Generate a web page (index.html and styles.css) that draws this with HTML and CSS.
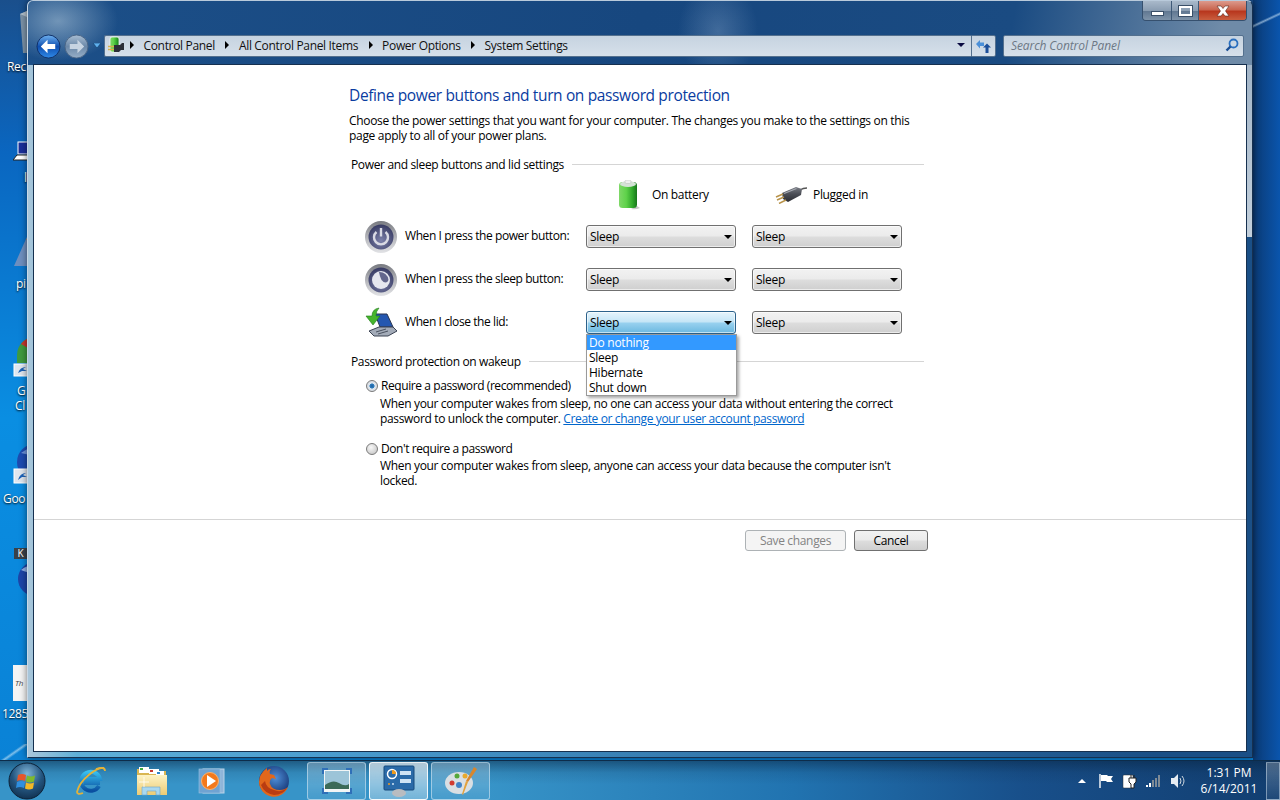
FILE: index.html
```html
<!DOCTYPE html>
<html lang="en">
<head>
  <meta charset="UTF-8">
  <title>System Settings</title>
  <link rel="stylesheet" href="styles.css">
</head>
<body>

  <!-- shared gradients -->
  <svg class="defs" width="0" height="0">
    <defs>
      <linearGradient id="g-ring" x1="0" y1="0" x2="0" y2="1"><stop offset="0" stop-color="#77797f"/><stop offset=".5" stop-color="#b3b4b9"/><stop offset="1" stop-color="#e2e3e6"/></linearGradient>
      <radialGradient id="g-navy" cx=".5" cy=".65" r=".7"><stop offset="0" stop-color="#7d82ab"/><stop offset="1" stop-color="#31345c"/></radialGradient>
      <linearGradient id="g-batt" x1="0" y1="0" x2="1" y2="0"><stop offset="0" stop-color="#7fd868"/><stop offset=".4" stop-color="#5fd24a"/><stop offset=".75" stop-color="#2fa72a"/><stop offset="1" stop-color="#17761b"/></linearGradient>
      <linearGradient id="g-back" x1="0" y1="0" x2="0" y2="1"><stop offset="0" stop-color="#6fb2f0"/><stop offset=".5" stop-color="#0f4fb0"/><stop offset="1" stop-color="#2f8ae8"/></linearGradient>
      <linearGradient id="g-fwd" x1="0" y1="0" x2="0" y2="1"><stop offset="0" stop-color="#a9bed3"/><stop offset=".5" stop-color="#6b88a8"/><stop offset="1" stop-color="#97afc8"/></linearGradient>
      <linearGradient id="g-folder" x1="0" y1="0" x2="0" y2="1"><stop offset="0" stop-color="#fdf3c4"/><stop offset="1" stop-color="#eccb74"/></linearGradient>
      <radialGradient id="g-fox" cx=".55" cy=".4" r=".6"><stop offset="0" stop-color="#4f8fd8"/><stop offset="1" stop-color="#12306f"/></radialGradient>
      <radialGradient id="g-orb" cx=".5" cy=".3" r=".75"><stop offset="0" stop-color="#7fb5d8"/><stop offset=".55" stop-color="#24557f"/><stop offset="1" stop-color="#0e2c4a"/></radialGradient>
      <linearGradient id="g-ie" x1="0" y1="0" x2="0" y2="1"><stop offset="0" stop-color="#39c0f0"/><stop offset="1" stop-color="#0a4fa0"/></linearGradient>
      <linearGradient id="g-plug" x1="0" y1="0" x2="0" y2="1"><stop offset="0" stop-color="#7a7d85"/><stop offset=".45" stop-color="#4c4f57"/><stop offset="1" stop-color="#2a2c32"/></linearGradient>
    </defs>
  </svg>

  <div class="desktop">
    <!-- desktop icons, mostly hidden behind the window -->
    <svg class="desk-icon icon-bin" width="10" height="48" viewBox="0 0 10 48"><path d="M3 6l7-3v42H6z" fill="#7c93a8"/><path d="M3 6l7-3v6z" fill="#b4c2ce"/></svg>
    <span class="desk-label label-rec">Rec</span>
    <svg class="desk-icon icon-laptop" width="24" height="24" viewBox="0 0 24 24"><rect x="5" y="2" width="15" height="12" fill="#1a2f9a" stroke="#fff"/><path d="M0 20l4-5h16v5z" fill="#fff" stroke="#222"/></svg>
    <span class="desk-label label-l">l</span>
    <svg class="desk-icon icon-cone" width="24" height="40" viewBox="0 0 24 40"><path d="M2 38L18 2l6 0v36z" fill="#6f8fbf"/><path d="M14 12l6-10 4 8z" fill="#d08a3f"/></svg>
    <span class="desk-label label-p">pi</span>
    <svg class="desk-icon icon-chrome" width="24" height="40" viewBox="0 0 24 40"><path d="M24 0A18 18 0 0 0 6 18v8h18z" fill="#3f9a3f"/><path d="M24 0a18 18 0 0 0-14 7l14 8z" fill="#c8372f"/><rect x="3" y="27" width="16" height="12" fill="#dfe6ee" stroke="#fff"/><path d="M7 36q2-6 8-6l-3 2 4 2-5 0z" fill="#1c63b8"/></svg>
    <span class="desk-label label-g1">G</span>
    <span class="desk-label label-cl">Cl</span>
    <svg class="desk-icon icon-earth" width="24" height="44" viewBox="0 0 24 44"><circle cx="24" cy="19" r="18" fill="#1d4bb0"/><path d="M10 10q8-6 14-6v8q-8 0-14-2z" fill="#6f95dd"/><rect x="3" y="26" width="16" height="14" fill="#dfe6ee" stroke="#fff"/><path d="M7 37q2-7 8-7l-3 2 4 2-5 0z" fill="#1c63b8"/></svg>
    <span class="desk-label label-goo">Goo</span>
    <span class="desk-chip">K</span>
    <svg class="desk-icon icon-ball" width="24" height="34" viewBox="0 0 24 34"><circle cx="24" cy="17" r="17" fill="#1d45a8"/><path d="M10 8q6-5 14-5v8q-8 0-14-3z" fill="#8fb0e8"/></svg>
    <div class="desk-doc"><span>Th</span></div>
    <span class="desk-label label-num">1285</span>

    <div class="window">
      <div class="caption">
        <div class="caption-btns">
          <span class="cap-btn cap-min"><i></i></span>
          <span class="cap-btn cap-max"><i></i></span>
          <span class="cap-btn cap-close">
            <svg width="18" height="12" viewBox="0 0 18 12"><path d="M3 1h4l2 2.500L11 1h4l-3.500 5L15 11h-4L9 8.500 7 11H3l3.500-5z" fill="#fff" stroke="#5a2a20" stroke-width=".6"/></svg>
          </span>
        </div>
      </div>

      <div class="toolbar">
        <div class="nav-btns">
          <svg width="25" height="25" viewBox="0 0 26 26"><circle cx="13" cy="13" r="12" fill="url(#g-back)" stroke="#0f2f66"/><path d="M5 13l7-7v4.500h8v5h-8V20z" fill="#fff"/></svg>
          <svg width="25" height="25" viewBox="0 0 26 26"><circle cx="13" cy="13" r="12" fill="url(#g-fwd)" stroke="#4a6585"/><path d="M21 13l-7-7v4.500H6v5h8V20z" fill="#c7d4e2"/></svg>
          <svg class="nav-drop" width="10" height="6" viewBox="0 0 10 6"><path d="M1 0h8L5 5z" fill="#5fb0ee" stroke="#0d3a66" stroke-width=".6"/></svg>
        </div>
        <div class="address">
          <svg class="crumb-icon" width="18" height="18" viewBox="0 0 18 18"><rect x="3" y="1" width="9" height="15" rx="2" fill="url(#g-batt)" stroke="#f4f8f4" stroke-width=".8"/><path d="M7 9h6l2-2h2v7h-3l-2 2H7z" fill="#2c2f38"/><path d="M1 10.500h6M1 13.500h6" stroke="#d8b24a" stroke-width="1.300"/></svg>
          <span class="crumb-arrow"></span><span>Control Panel</span>
          <span class="crumb-arrow"></span><span>All Control Panel Items</span>
          <span class="crumb-arrow"></span><span>Power Options</span>
          <span class="crumb-arrow"></span><span>System Settings</span>
          <span class="address-drop"></span>
        </div>
        <div class="refresh">
          <svg width="16" height="16" viewBox="0 0 16 16"><path d="M0 6l4-4v2.500h4V8H4v2.500z" fill="#4a8fd8"/><path d="M15 9.500l-4-4-4 4h2.500V15h3V9.500z" fill="#1c4f9a"/></svg>
        </div>
        <div class="search">
          <span>Search Control Panel</span>
          <svg width="14" height="14" viewBox="0 0 14 14"><circle cx="8.500" cy="5.500" r="4" fill="none" stroke="#2a6fbf" stroke-width="1.800"/><path d="M5.500 8.500L1.500 12.500" stroke="#1b4f95" stroke-width="2.400"/></svg>
        </div>
      </div>

      <div class="content">
        <div class="panel">
          <h1>Define power buttons and turn on password protection</h1>
          <p class="intro">Choose the power settings that you want for your computer. The changes you make to the settings on this page apply to all of your power plans.</p>

          <div class="group-head first">Power and sleep buttons and lid settings</div>

          <div class="setting-grid head-row">
            <div></div>
            <div class="col-head">
              <svg class="battery" width="22" height="30" viewBox="0 0 22 30"><path d="M18 26l3 2q-4 2-9 1z" fill="#c9c9c9"/><rect x="0" y="2" width="18" height="26" rx="3.500" fill="url(#g-batt)"/><ellipse cx="9" cy="4" rx="8" ry="3" fill="#d5e2d6"/><rect x="6" y="0" width="6" height="3.500" rx="1.500" fill="#eef0ee" stroke="#a9b0aa" stroke-width=".4"/></svg>
              <span>On battery</span>
            </div>
            <div class="col-head plug">
              <svg width="32" height="17" viewBox="0 0 32 17"><path d="M25 3q3-2 7-2" stroke="#555" stroke-width="1.400" fill="none"/><path d="M7 6L21 0l6 2-1 6-13 7-5-3z" fill="url(#g-plug)"/><path d="M9 6.500L21.500 1.500" stroke="#a4a7af" stroke-width="1.200"/><path d="M8 7L1 10M9 10L2 13M11 13l-7 3.500" stroke="#b8934a" stroke-width="1.500"/></svg>
              <span>Plugged in</span>
            </div>
          </div>

          <div class="setting-grid">
            <div class="setting-label">
              <svg width="32" height="32" viewBox="0 0 32 32"><circle cx="16" cy="16" r="16" fill="url(#g-ring)"/><circle cx="16" cy="16" r="12.500" fill="url(#g-navy)"/><path d="M11.500 11a7 7 0 1 0 9 0" fill="none" stroke="#d9dae4" stroke-width="2.400"/><path d="M16 7v8.500" stroke="#d9dae4" stroke-width="2.400"/></svg>
              <span>When I press the power button:</span>
            </div>
            <div class="combo"><span>Sleep</span></div>
            <div class="combo"><span>Sleep</span></div>
          </div>

          <div class="setting-grid">
            <div class="setting-label">
              <svg width="32" height="32" viewBox="0 0 32 32"><circle cx="16" cy="16" r="16" fill="url(#g-ring)"/><circle cx="16" cy="16" r="12.500" fill="url(#g-navy)"/><circle cx="16" cy="16" r="9" fill="#e6e7ef"/><path d="M14 8a9 9 0 0 1 9.500 8q-1 2.500-3 2.500-5-.5-6.500-10.500z" fill="#63668c"/></svg>
              <span>When I press the sleep button:</span>
            </div>
            <div class="combo"><span>Sleep</span></div>
            <div class="combo"><span>Sleep</span></div>
          </div>

          <div class="setting-grid">
            <div class="setting-label">
              <svg width="32" height="32" viewBox="0 0 32 32"><path d="M10 7h12l6 13H15z" fill="#2457b0" stroke="#2a3550"/><path d="M4 24l10-4h14l4 4-9 5H9z" fill="#a3abb8" stroke="#3a4252"/><path d="M11 25l10-3M13 27l10-3" stroke="#4a5260"/><path d="M14 1q-7 1-7 8H1l7 9 7-9H11q0-5 3-8z" fill="#46b52c" stroke="#1f7a1a" stroke-width=".6"/></svg>
              <span>When I close the lid:</span>
            </div>
            <div class="combo-wrap">
              <div class="combo open"><span>Sleep</span></div>
              <ul class="dropdown">
                <li class="selected">Do nothing</li>
                <li>Sleep</li>
                <li>Hibernate</li>
                <li>Shut down</li>
              </ul>
            </div>
            <div class="combo"><span>Sleep</span></div>
          </div>

          <div class="group-head">Password protection on wakeup</div>

          <div class="option first-option">
            <div class="radio-line"><span class="radio checked"></span><span>Require a password (recommended)</span></div>
            <p class="option-desc">When your computer wakes from sleep, no one can access your data without entering the correct password to unlock the computer. <a href="#">Create or change your user account password</a></p>
          </div>
          <div class="option">
            <div class="radio-line"><span class="radio"></span><span>Don't require a password</span></div>
            <p class="option-desc">When your computer wakes from sleep, anyone can access your data because the computer isn't locked.</p>
          </div>
        </div>

        <div class="divider"></div>

        <div class="actions">
          <button class="btn btn-save" disabled>Save changes</button>
          <button class="btn btn-cancel">Cancel</button>
        </div>
      </div>
    </div>
  </div>

  <div class="taskbar">
    <div class="start">
      <svg width="38" height="38" viewBox="0 0 38 38"><circle cx="19" cy="19" r="18" fill="url(#g-orb)" stroke="#0c2238"/><path d="M10 13q4-2 8 0l-1 6q-4-2-8 0z" fill="#e8562a"/><path d="M19 13.500q4 2 8 0l-1 6q-4 2-8 0z" fill="#7fba2c"/><path d="M9 20q4-2 8 0l-1 6q-4-2-8 0z" fill="#2f8fe0"/><path d="M18 20.500q4 2 8 0l-1 6q-4 2-8 0z" fill="#f4b927"/></svg>
    </div>
    <div class="task-icon first-task">
      <svg width="32" height="30" viewBox="0 0 32 30"><path d="M24 20a9.500 9.500 0 1 1 1-7H11v4h14" fill="none" stroke="url(#g-ie)" stroke-width="4"/><path d="M29 2C22 1 5 13 2 26q0 3 6 1" fill="none" stroke="#e3b23a" stroke-width="1.800"/><path d="M21 3q9-3 9 2" fill="none" stroke="#e3b23a" stroke-width="1.800"/></svg>
    </div>
    <div class="task-icon">
      <svg width="32" height="30" viewBox="0 0 32 30"><path d="M1 3h12l2 2h15v23H1z" fill="#d9b652"/><rect x="3" y="1" width="10" height="6" fill="#fff"/><rect x="4" y="2" width="3" height="2" fill="#3fa83f"/><rect x="13" y="3" width="10" height="5" fill="#fff"/><rect x="14" y="4" width="3" height="2" fill="#c8372f"/><rect x="20" y="5" width="8" height="4" fill="#fff"/><rect x="21" y="6" width="3" height="2" fill="#2f83c8"/><rect x="1" y="9" width="30" height="20" fill="url(#g-folder)"/><path d="M6 29v-8h18v8h-4v-4H11v4z" fill="#a9d8f0" stroke="#6fa6c8" stroke-width=".6"/><path d="M8 11v10M3 16h10" stroke="#fff" stroke-width=".8"/></svg>
    </div>
    <div class="task-icon">
      <svg width="30" height="26" viewBox="0 0 30 26"><rect x="5" y="1" width="21" height="24" fill="#8fb5d9" stroke="#b9d3e8"/><rect x="1" y="1" width="21" height="24" fill="#6fa3d2" stroke="#9cc2e0" stroke-width=".6"/><circle cx="12" cy="13" r="8.500" fill="#f3791c" stroke="#fbb26d"/><path d="M9 7l9 6-9 6z" fill="#fff"/></svg>
    </div>
    <div class="task-icon">
      <svg width="32" height="32" viewBox="0 0 32 32"><circle cx="16" cy="16" r="15" fill="url(#g-fox)"/><path d="M9 3Q1 9 1 17a15 15 0 0 0 29 5q-3 3-8 3-8 0-10-6-1-4 2-6l4 1-2-4-4-1q-1-3 1-5-3 0-4 2z" fill="#e2671b"/><path d="M3 20q3 8 13 10 9 0 13-7-6 5-13 2-8-2-9-9z" fill="#b93c12"/></svg>
    </div>
    <div class="task-btn">
      <svg width="32" height="28" viewBox="0 0 32 28"><path d="M1 1h6v3H4v3H1zM25 1h6v6h-3V4h-3zM1 21h3v3h3v3H1zM28 21h3v6h-6v-3h3z" fill="#2f6fb8"/><rect x="3" y="3" width="26" height="22" fill="#f2f5f6"/><rect x="4" y="4" width="24" height="18" fill="#9cc4d8"/><path d="M4 18q8-6 14-2t10 1v5H4z" fill="#3b6a58"/></svg>
    </div>
    <div class="task-btn active">
      <svg width="32" height="32" viewBox="0 0 32 32"><rect x="1" y="1" width="30" height="24" rx="1" fill="#2a6aa8" stroke="#174a7c"/><circle cx="9" cy="9" r="4.500" fill="none" stroke="#fff" stroke-width="1.500"/><path d="M9 9V5a4 4 0 0 1 4 4z" fill="#f09a1c"/><rect x="17" y="6" width="11" height="4" fill="#cfe3f4"/><rect x="17" y="14" width="11" height="4" fill="#cfe3f4"/><circle cx="6" cy="19" r="1" fill="#f09a1c"/><circle cx="10" cy="19" r="1" fill="#cfe3f4"/><ellipse cx="16" cy="28" rx="7" ry="4" fill="#b9bcc0"/></svg>
    </div>
    <div class="task-btn">
      <svg width="34" height="34" viewBox="0 0 34 34"><ellipse cx="15" cy="19" rx="14" ry="11" fill="#d9dfe3"/><circle cx="8" cy="19" r="2.500" fill="#d13a30"/><circle cx="13" cy="12" r="2.500" fill="#55a83a"/><circle cx="21" cy="12" r="2.500" fill="#e8a92c"/><circle cx="15" cy="21" r="3" fill="#3f83c8"/><path d="M30 3l3 2-9 13-2-1z" fill="#d8862c"/><path d="M22 17l2 1-5 13-1-1z" fill="#e3a23c"/></svg>
    </div>

    <div class="tray">
      <svg class="tray-chevron" width="8" height="5" viewBox="0 0 8 5"><path d="M0 5l4-4 4 4z" fill="#fff"/></svg>
      <svg width="16" height="16" viewBox="0 0 16 16"><path d="M2 1v14" stroke="#fff" stroke-width="1.400"/><path d="M3 2h6l1 1h5l-2 3 2 3H9L8 8H3z" fill="#fff"/></svg>
      <svg width="16" height="16" viewBox="0 0 16 16"><rect x="1" y="2" width="10" height="13" rx="1" fill="#fff" stroke="#333" stroke-width=".5"/><path d="M7 5h7v4l-2 2v4H9v-4L7 9zM9 2v3M12 2v3" fill="#fff" stroke="#222" stroke-width="1"/></svg>
      <svg width="16" height="14" viewBox="0 0 16 14"><rect x="0" y="11" width="2" height="2" fill="#fff"/><rect x="3" y="9" width="2" height="4" fill="#fff"/><rect x="6" y="6" width="2" height="7" fill="#7d8a96"/><rect x="9" y="4" width="2" height="9" fill="#7d8a96"/><rect x="12" y="1" width="2" height="12" fill="#7d8a96"/></svg>
      <svg width="16" height="16" viewBox="0 0 16 16"><path d="M1 5h3l4-4v14l-4-4H1z" fill="#e6ecf2"/><path d="M10 5q2 3 0 6M12 3q4 5 0 10" fill="none" stroke="#cfd8e0"/></svg>
    </div>
    <div class="clock">
      <span>1:31 PM</span>
      <span>6/14/2011</span>
    </div>
    <div class="show-desktop"></div>
  </div>

</body>
</html>
```

FILE: styles.css
```css
/* Global */
html, body {
  margin: 0;
  padding: 0;
  height: 100%;
}
body {
  display: flex;
  flex-direction: column;
  height: 800px;
  overflow: hidden;
  font-family: "Open Sans", "Noto Sans", sans-serif;
  font-size: 12px;
  line-height: 15px;
  letter-spacing: -0.33px;
  color: #000;
}
svg {
  display: block;
  flex: none;
}
.defs {
  position: absolute;
}

/* Desktop */
.desktop {
  position: relative;
  flex: 1;
  overflow: hidden;
  background:
    linear-gradient(155deg, transparent 46%, rgba(200,225,245,.6) 50%, transparent 54%) right top / 27px 40px no-repeat,
    linear-gradient(90deg, #0b3a74 0, #0a55ad 100%) right top / 27px 100% no-repeat,
    linear-gradient(145deg, transparent 45%, rgba(220,240,250,.55) 52%, transparent 60%) left bottom / 28px 16px no-repeat,
    linear-gradient(180deg, #1a4f8c 0, #0a66c0 20%, #0a8ee2 55%, #0a82d6 100%);
}
.desk-label {
  position: absolute;
  color: #fff;
  text-shadow: 0 1px 2px #000;
}
.desk-icon {
  position: absolute;
  left: 3px;
}
.label-rec { left: 7px; top: 59px; }
.label-l { left: 24px; top: 170px; }
.label-p { left: 16px; top: 276px; }
.label-g1 { left: 17px; top: 383px; }
.label-cl { left: 15px; top: 398px; }
.label-goo { left: 3px; top: 491px; }
.label-num { left: 2px; top: 706px; }
.icon-bin { left: 17px; top: 8px; }
.icon-laptop { left: 13px; top: 140px; }
.icon-cone { top: 228px; left: 12px; }
.icon-chrome { top: 337px; left: 11px; }
.icon-earth { top: 443px; left: 11px; }
.icon-ball { top: 562px; left: 11px; }
.desk-chip {
  position: absolute;
  left: 14px;
  top: 548px;
  width: 13px;
  height: 11px;
  background: #3a4148;
  color: #fff;
  font-size: 10px;
  line-height: 11px;
  text-align: center;
}
.desk-doc {
  position: absolute;
  left: 13px;
  top: 665px;
  width: 14px;
  height: 36px;
  background: #f4f4f4;
  color: #444;
  font-size: 8px;
  font-style: italic;
  line-height: 36px;
  padding-left: 2px;
}

/* Window frame */
.window {
  position: absolute;
  left: 27px;
  top: 0;
  width: 1226px;
  height: 758px;
  box-sizing: border-box;
  padding: 0 5px 5px;
  display: flex;
  flex-direction: column;
  border: 1px solid #16304f;
  border-top-color: #b9cadb;
  border-left-color: #c9d8e6;
  border-radius: 6px 6px 0 0;
  background:
    radial-gradient(ellipse 60px 40px at 30px 20px, rgba(170,195,215,.6), transparent),
    radial-gradient(ellipse 40px 50px at 690px 30px, rgba(140,170,205,.35), transparent),
    linear-gradient(100deg, #1c4f88 0, #17477f 50%, #1a4b82 80%, #6f8ba8 97%) left top / 100% 64px no-repeat,
    linear-gradient(180deg, #a4b6c8 0, #c3d0dc 100%) right 64px / 7px 172px no-repeat,
    linear-gradient(90deg, #a9c6da 0, #5fb0d8 4%, #4a9ccf 25%, #1a4f86 92%);
  box-shadow: 0 0 7px rgba(0,0,0,.55);
}
.caption {
  display: flex;
  justify-content: flex-end;
  height: 19px;
}
.caption-btns {
  display: flex;
  height: 20px;
  border: 1px solid #36506e;
  border-top: none;
  border-radius: 0 0 4px 4px;
  overflow: hidden;
  box-sizing: border-box;
}
.cap-btn {
  display: flex;
  align-items: center;
  justify-content: center;
  width: 28px;
  border-right: 1px solid #3f5a78;
  background: linear-gradient(180deg, #a9b9ca 0, #8a9db2 50%, #5f7690 51%, #7e93a9 100%);
}
.cap-max { width: 26px; }
.cap-close {
  width: 47px;
  border-right: none;
  background: linear-gradient(180deg, #dc9a8c 0, #c9654f 45%, #b8371e 55%, #c95e3f 100%);
}
.cap-min i {
  display: block;
  width: 11px;
  height: 3px;
  margin-top: 5px;
  background: #fff;
  border: 1px solid #3a4f68;
}
.cap-max i {
  display: block;
  width: 9px;
  height: 6px;
  border: 2px solid #fff;
  outline: 1px solid #3a4f68;
}

/* Address row */
.toolbar {
  display: flex;
  align-items: center;
  height: 22px;
  margin: 15px 3px 7px 3px;
}
.nav-btns {
  display: flex;
  align-items: center;
  gap: 3px;
  width: 68px;
  flex: none;
}
.nav-drop {
  margin-left: 0;
}
.address,
.refresh,
.search {
  height: 22px;
  box-sizing: border-box;
  border: 1px solid #54708e;
  background: linear-gradient(180deg, #c6d3e0 0, #d6e0ea 100%);
}
.address {
  flex: 1;
  display: flex;
  align-items: center;
  padding: 0 0 2px 2px;
  border-right: none;
  border-radius: 2px 0 0 2px;
  color: #111;
}
.crumb-icon {
  margin-right: -5.5px;
}
.crumb-arrow {
  width: 0;
  height: 0;
  margin: 0 9.5px 0 10.5px;
  border-left: 4px solid #000;
  border-top: 4px solid transparent;
  border-bottom: 4px solid transparent;
}
.address-drop {
  width: 0;
  height: 0;
  margin-left: auto;
  margin-right: 6px;
  border-top: 4px solid #0a0a40;
  border-left: 4px solid transparent;
  border-right: 4px solid transparent;
}
.refresh {
  display: flex;
  align-items: center;
  justify-content: center;
  width: 25px;
  margin-right: 7px;
  border-radius: 0 2px 2px 0;
}
.search {
  display: flex;
  align-items: center;
  justify-content: space-between;
  width: 241px;
  padding: 0 4px 2px 7px;
  border-radius: 2px;
  color: #6d7885;
  font-style: italic;
  letter-spacing: -0.1px;
}

/* Content */
.content {
  flex: 1;
  background: #fff;
  border: 1px solid #16304f;
  box-sizing: border-box;
}
.panel {
  margin-left: 315px;
  width: 575px;
  padding-top: 19px;
}
h1 {
  margin: 0;
  font-size: 15.5px;
  line-height: 22px;
  font-weight: 400;
  letter-spacing: -0.37px;
  color: #0a3ca0;
}
.intro {
  margin: 7px 0 0;
  letter-spacing: -0.31px;
}
.group-head {
  display: flex;
  align-items: center;
  gap: 8px;
  padding-left: 2px;
  margin-top: 20px;
  letter-spacing: -0.35px;
}
.group-head::after {
  content: "";
  flex: 1;
  height: 1px;
  background: #d5d5d5;
}
.group-head.first {
  margin-top: 14px;
}

/* Settings grid */
.setting-grid {
  display: grid;
  grid-template-columns: 221px 150px 150px;
  column-gap: 16px;
  align-items: center;
  height: 23px;
}
.setting-grid + .setting-grid {
  margin-top: 20px;
}
.setting-grid.head-row {
  height: 30px;
  margin-top: 8px;
}
.setting-grid.head-row + .setting-grid {
  margin-top: 15px;
}
.col-head {
  display: flex;
  align-items: center;
  gap: 11px;
  padding-left: 33px;
}
.col-head span {
  margin-top: -2px;
}
.col-head.plug {
  padding-left: 23px;
  gap: 6px;
}
.setting-label {
  display: flex;
  align-items: center;
  gap: 8px;
  padding-left: 16px;
  height: 23px;
  letter-spacing: -0.42px;
}
.setting-label span {
  margin-top: -2px;
}
.combo {
  position: relative;
  height: 23px;
  box-sizing: border-box;
  border: 1px solid #707070;
  border-radius: 3px;
  padding: 3px 0 0 3px;
  letter-spacing: -0.25px;
  background: linear-gradient(180deg, #f2f2f2 0, #ebebeb 48%, #dddddd 52%, #cfcfcf 100%);
  box-shadow: inset 0 0 0 1px rgba(255,255,255,.6);
}
.combo::after {
  content: "";
  position: absolute;
  right: 3px;
  top: 9px;
  border-top: 4px solid #000;
  border-left: 4px solid transparent;
  border-right: 4px solid transparent;
}
.combo.open {
  border-color: #2c628b;
  background: linear-gradient(180deg, #e5f4fc 0, #c4e5f6 48%, #98d1ef 52%, #6cb8e0 100%);
}
.combo-wrap {
  position: relative;
}
.dropdown {
  position: absolute;
  left: 0;
  top: 23px;
  z-index: 2;
  width: 151px;
  box-sizing: border-box;
  margin: 0;
  padding: 0;
  height: 62px;
  list-style: none;
  letter-spacing: -0.25px;
  background: #fff;
  border: 1px solid #9a9a9a;
  box-shadow: 2px 2px 3px rgba(0,0,0,.35);
}
.dropdown li {
  height: 15px;
  padding-left: 2px;
}
.dropdown .selected {
  background: #3399ff;
  color: #fff;
}

/* Password options */
.first-option {
  margin-top: 9px;
}
.option + .option {
  margin-top: 15px;
}
.radio-line {
  display: flex;
  align-items: center;
  gap: 3px;
  padding-left: 17px;
  letter-spacing: -0.42px;
}
.radio {
  width: 10px;
  height: 10px;
  border: 1px solid #7a7a7a;
  border-radius: 50%;
  background: radial-gradient(circle at 40% 35%, #f8f8f8, #bfbfbf);
}
.radio.checked {
  background: radial-gradient(circle, #1f5f9f 0, #2f7fbf 32%, #dfe6ee 40%, #d0d4d8 100%);
}
.option-desc {
  margin: 3px 0 0;
  padding-left: 31px;
  width: 525px;
  letter-spacing: -0.34px;
}
.option + .option .option-desc {
  margin-top: 2px;
}
.option-desc a {
  letter-spacing: -0.37px;
  color: #0066cc;
}

/* Bottom buttons */
.divider {
  height: 1px;
  margin-top: 31px;
  background: #d5d5d5;
}
.actions {
  display: flex;
  justify-content: flex-end;
  gap: 8px;
  margin-top: 10px;
  padding-right: 318px;
}
.btn {
  height: 21px;
  padding: 0;
  border: 1px solid #707070;
  border-radius: 3px;
  font: inherit;
  letter-spacing: inherit;
  background: linear-gradient(180deg, #f2f2f2 0, #ebebeb 48%, #dddddd 52%, #cfcfcf 100%);
}
.btn-save {
  width: 101px;
  border-color: #adb2b5;
  background: #f4f4f4;
  color: #838383;
}
.btn-cancel {
  width: 74px;
  color: #000;
}

/* Taskbar */
.taskbar {
  position: relative;
  display: flex;
  align-items: center;
  height: 40px;
  flex: none;
  border-top: 1px solid #0d2c4a;
  box-sizing: border-box;
  color: #fff;
  background:
    linear-gradient(180deg, rgba(8,36,64,.5) 0, rgba(8,36,64,.12) 30%, transparent 60%),
    linear-gradient(90deg, #3794c8 0, #3794c8 38%, #2173b0 62%, #184f8a 80%, #123e70 100%);
}
.start {
  width: 54px;
  padding-left: 8px;
  box-sizing: border-box;
}
.task-icon {
  display: flex;
  justify-content: center;
  width: 61px;
}
.first-task {
  margin-left: 6px;
}
.task-icon + .task-btn {
  margin-left: 3px;
}
.task-btn {
  display: flex;
  align-items: center;
  justify-content: center;
  width: 59px;
  height: 38px;
  margin-right: 3px;
  box-sizing: border-box;
  border: 1px solid rgba(200,225,240,.65);
  border-radius: 3px;
  background: linear-gradient(180deg, rgba(255,255,255,.28), rgba(255,255,255,.08));
}
.task-btn.active {
  background: linear-gradient(180deg, rgba(255,255,255,.65), rgba(255,255,255,.3));
  border-color: rgba(255,255,255,.85);
}
.tray {
  display: flex;
  align-items: center;
  gap: 8px;
  margin-left: auto;
}
.tray-chevron {
  margin-right: 4px;
}
.clock {
  display: flex;
  flex-direction: column;
  align-items: center;
  gap: 1px;
  width: 74px;
  margin: 0 0 0 6px;
  letter-spacing: 0;
}
.show-desktop {
  width: 14px;
  height: 38px;
  box-sizing: border-box;
  border: 1px solid rgba(210,225,240,.5);
  background: linear-gradient(180deg, rgba(255,255,255,.25), rgba(255,255,255,.05));
}
```
